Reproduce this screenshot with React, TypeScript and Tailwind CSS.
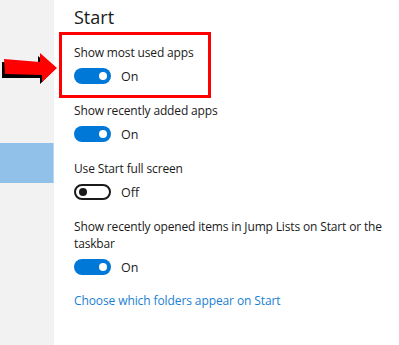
import React from "react";

function Toggle({ on }: { on: boolean }) {
  return (
    <div className="flex items-center h-[16px]">
      {on ? (
        <div className="w-[37px] h-[16px] rounded-full bg-[#0078d7] flex items-center justify-end pr-[4px]">
          <div className="w-[8px] h-[8px] rounded-full bg-white" />
        </div>
      ) : (
        <div className="w-[37px] h-[16px] rounded-full border-2 border-[#1a1a1a] flex items-center pl-[3px]">
          <div className="w-[8px] h-[8px] rounded-full bg-[#1a1a1a]" />
        </div>
      )}
      <span className="ml-[10px] text-[12.5px] leading-[17px] text-[#1a1a1a]">{on ? "On" : "Off"}</span>
    </div>
  );
}

function Setting({ label, on, className = "" }: { label: string; on: boolean; className?: string }) {
  return (
    <div className={"flex flex-col " + className}>
      <div className="text-[12px] tracking-[-0.15px] leading-[17px] text-[#1a1a1a] max-w-[318px]">{label}</div>
      <div className="mt-[7px]">
        <Toggle on={on} />
      </div>
    </div>
  );
}

export default function App() {
  return (
    <div
      className="relative flex w-[399px] h-[345px] bg-white overflow-hidden"
      style={{ fontFamily: '"Open Sans", "Noto Sans", sans-serif' }}
    >
      <div className="w-[54px] shrink-0 bg-[#f2f2f2] flex flex-col">
        <div className="h-[143px]" />
        <div className="h-[40px] bg-[#91c1e9] border-r border-[#b5d7f3]" />
      </div>
      <div className="flex-1 pl-[20px] pt-[5px] flex flex-col">
        <div className="text-[18px] leading-[24px] text-[#1a1a1a]">Start</div>
        <Setting className="mt-[15px]" label="Show most used apps" on={true} />
        <Setting className="mt-[18px]" label="Show recently added apps" on={true} />
        <Setting className="mt-[18px]" label="Use Start full screen" on={false} />
        <Setting
          className="mt-[18px]"
          label="Show recently opened items in Jump Lists on Start or the taskbar"
          on={true}
        />
        <a className="mt-[17px] text-[12px] tracking-[-0.1px] leading-[17px] text-[#1a7fd1] cursor-pointer">
          Choose which folders appear on Start
        </a>
      </div>
      {/* annotation: red box */}
      <div className="absolute left-[59px] top-[32px] w-[152px] h-[66px] border-[3px] border-[#ff0000] pointer-events-none" />
      {/* annotation: arrow */}
      <svg className="absolute left-0 top-[50px] pointer-events-none" width="60" height="36" viewBox="0 50 60 36">
        <polygon points="2,62 38,64 38,56 54,70 40,84 40,78 2,78" fill="#000" />
        <polygon points="4,59 40,62 40,53 57,68 42,82 42,75 5,74" fill="#ff0000" />
      </svg>
    </div>
  );
}
